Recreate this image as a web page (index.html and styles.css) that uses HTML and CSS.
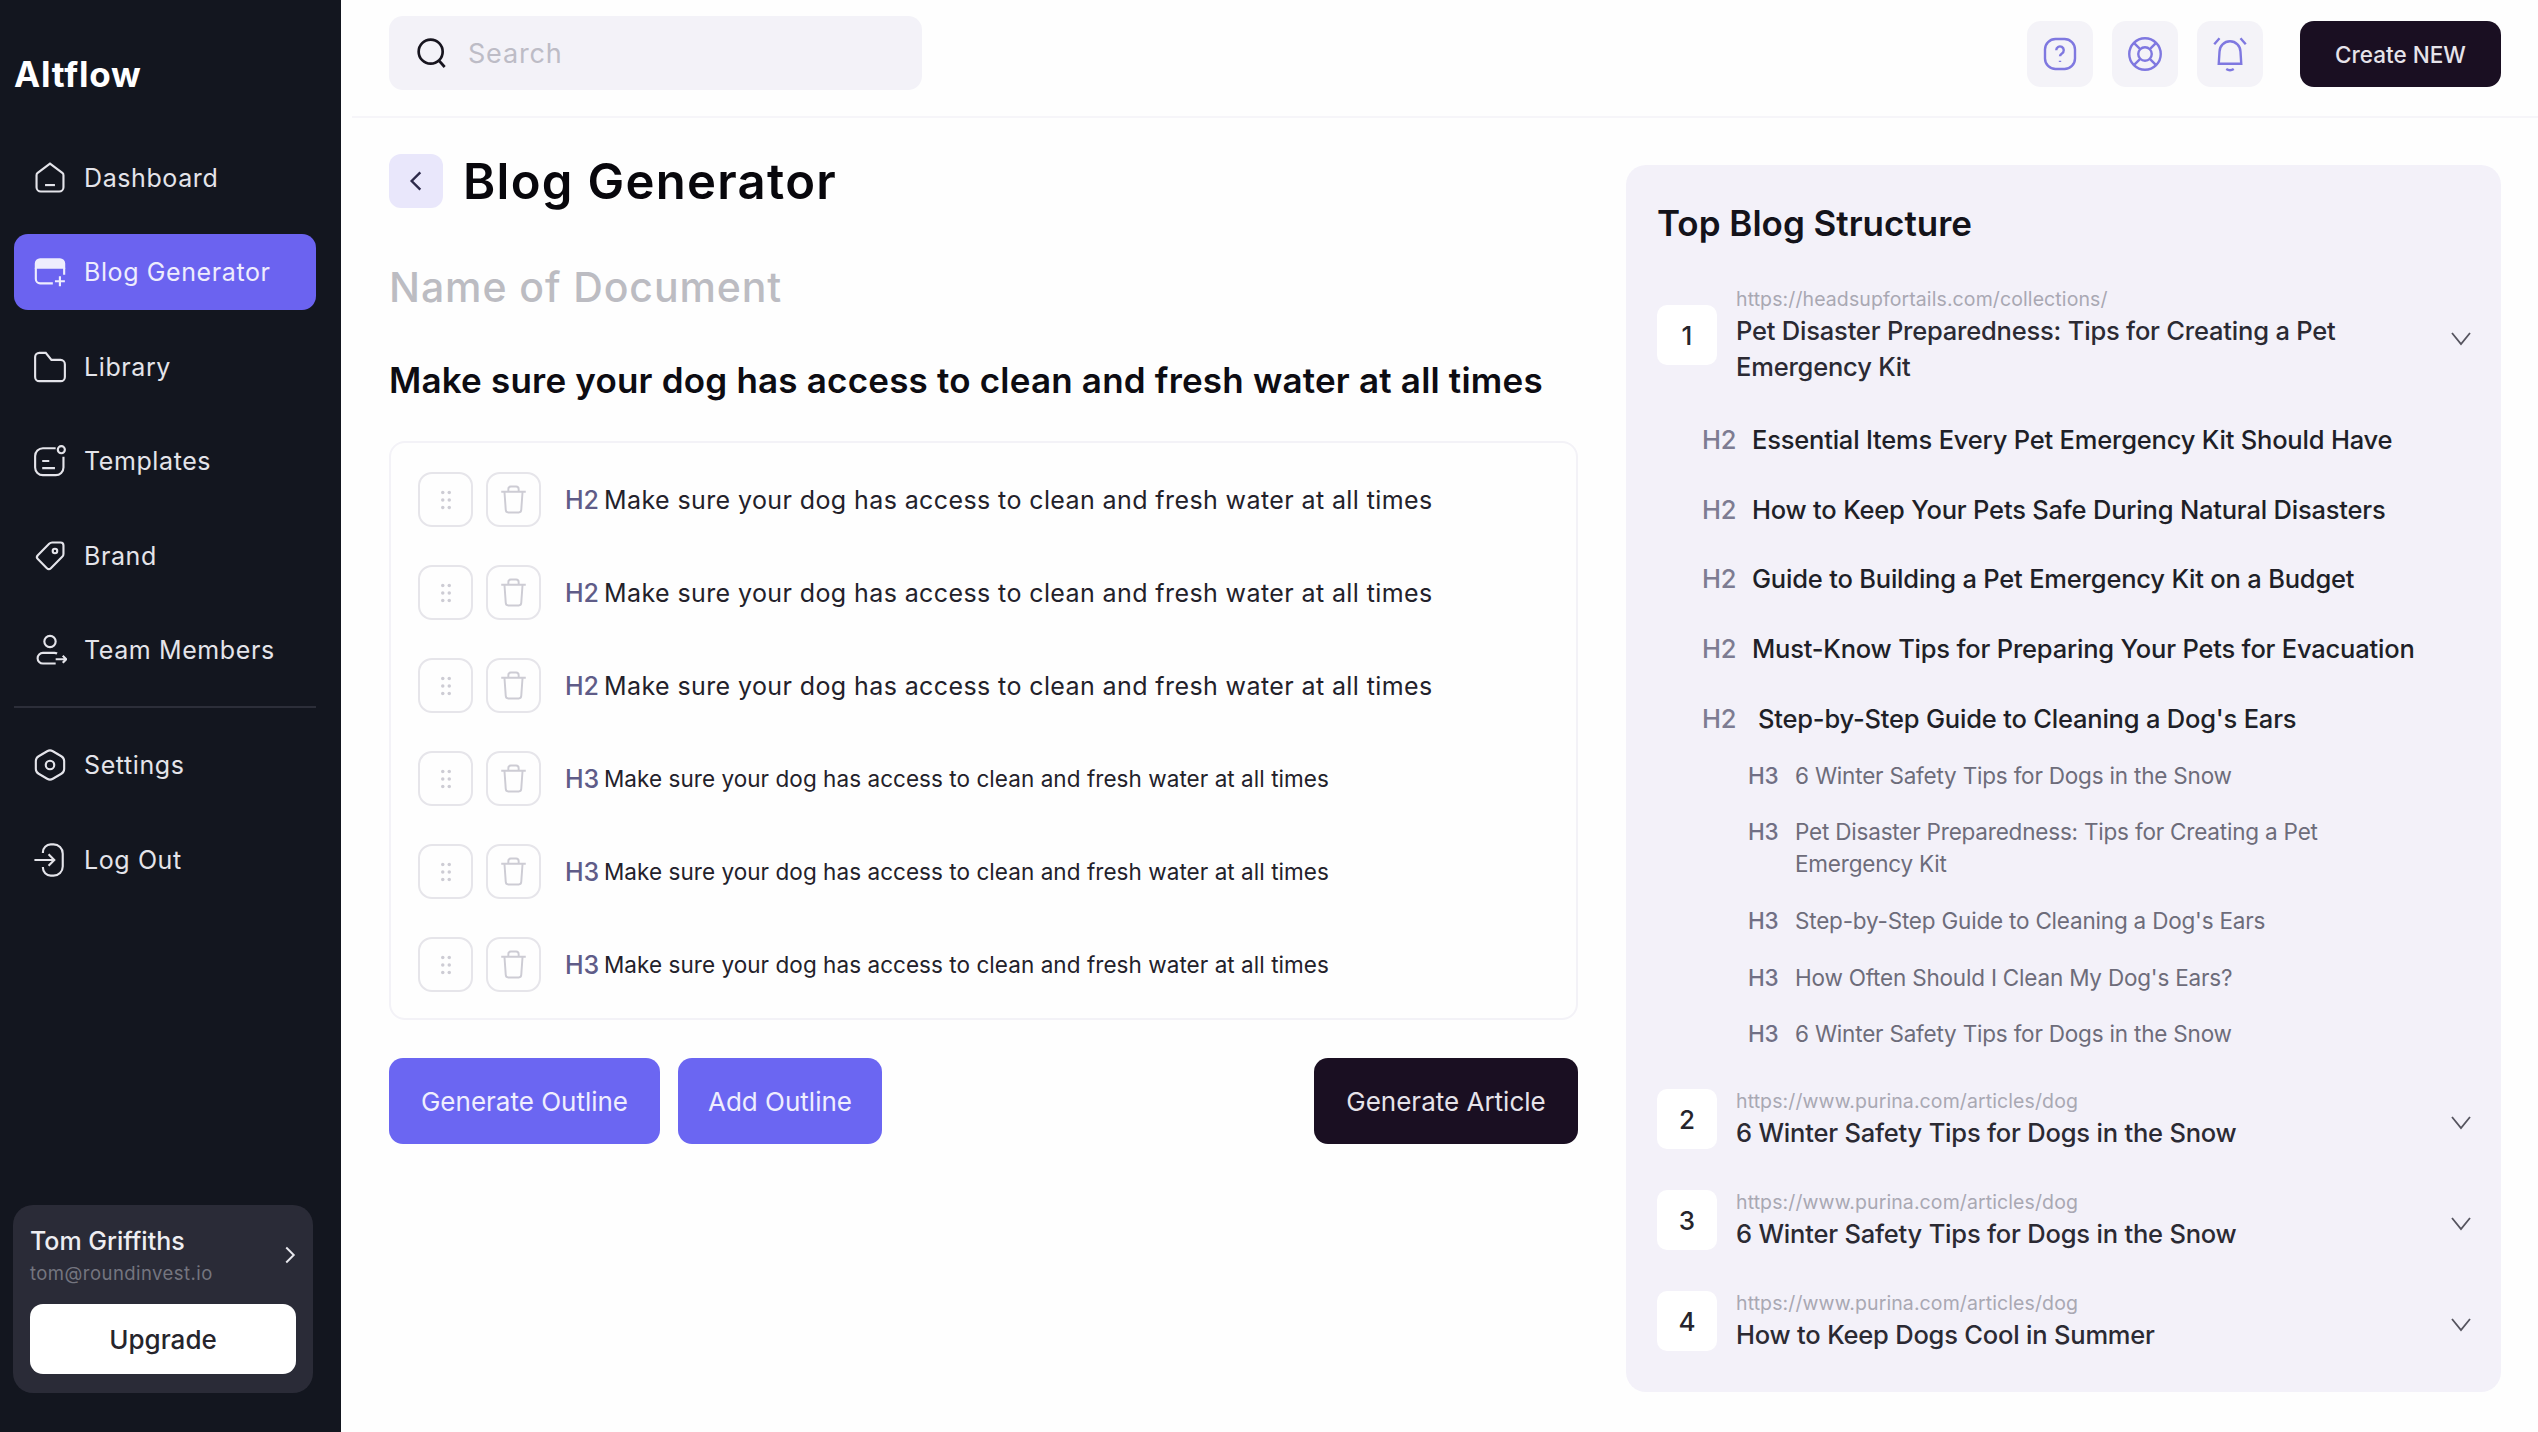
FILE: index.html
```html
<!DOCTYPE html>
<html lang="en">
<head>
  <meta charset="UTF-8" />
  <meta name="viewport" content="width=device-width, initial-scale=1.0" />
  <title>Altflow - Blog Generator</title>
  <link rel="stylesheet" href="styles.css">
</head>
<body>
  <svg class="sprite" width="0" height="0">
    <symbol id="i-drag" viewBox="0 0 24 24"><g fill="currentColor"><circle cx="9" cy="5" r="1.6"/><circle cx="15" cy="5" r="1.6"/><circle cx="9" cy="12" r="1.6"/><circle cx="15" cy="12" r="1.6"/><circle cx="9" cy="19" r="1.6"/><circle cx="15" cy="19" r="1.6"/></g></symbol>
    <symbol id="i-trash" viewBox="0 0 24 24"><path d="M2.5 6h19M5 6l1 14a2 2 0 0 0 2 2h8a2 2 0 0 0 2-2l1-14M8 6V4a2 2 0 0 1 2-2h4a2 2 0 0 1 2 2v2" fill="none" stroke="currentColor" stroke-width="1.5"/></symbol>
    <symbol id="i-chevron" viewBox="0 0 24 24"><path d="M3 7l9 11 9-11" fill="none" stroke="currentColor" stroke-width="1.8"/></symbol>
  </svg>

  <div class="app">
    <aside class="sidebar">
      <div class="logo">Altflow</div>
      <nav>
        <a class="nav-item">
          <svg viewBox="0 0 24 24"><path d="M2.5 10a2 2 0 0 1 .8-1.6L12 1.8l8.700 6.600a2 2 0 0 1 .8 1.600v8.500a3 3 0 0 1-3 3h-13a3 3 0 0 1-3-3z"/><path d="M8.500 17h7"/></svg>
          Dashboard
        </a>
        <a class="nav-item active">
          <svg viewBox="0 0 24 24"><path d="M2 9V6a3 3 0 0 1 3-3h14a3 3 0 0 1 3 3v3z" fill="currentColor"/><path d="M2 9v8a3 3 0 0 0 3 3h9M22 9v5"/><path d="M19 15v7M15.500 18.500h7"/></svg>
          Blog Generator
        </a>
        <a class="nav-item">
          <svg viewBox="0 0 24 24"><path d="M1.500 5a3 3 0 0 1 3-3h4.500l4 5h6.500a3 3 0 0 1 3 3v9a3 3 0 0 1-3 3h-15a3 3 0 0 1-3-3z"/></svg>
          Library
        </a>
        <a class="nav-item">
          <svg viewBox="0 0 24 24"><path d="M16 3H7a5.500 5.500 0 0 0-5.500 5.500v8A5.500 5.500 0 0 0 7 22h9a5.500 5.500 0 0 0 5.500-5.500V9"/><circle cx="20" cy="4" r="2.500"/><path d="M6.500 12h5M6.500 17h9"/></svg>
          Templates
        </a>
        <a class="nav-item">
          <svg viewBox="0 0 24 24"><path d="M13.500 2.500h6a2 2 0 0 1 2 2v6a3 3 0 0 1-.9 2.100l-8 8a2 2 0 0 1-2.800 0l-6.400-6.400a2 2 0 0 1 0-2.800l8-8a3 3 0 0 1 2.100-.9z"/><circle cx="15.500" cy="8.500" r="1.600"/></svg>
          Brand
        </a>
        <a class="nav-item">
          <svg viewBox="0 0 24 24"><circle cx="12" cy="6" r="4"/><path d="M17 14.500a4 4 0 0 0-2-.5H7a3.500 3.500 0 0 0 0 7.500h9"/><path d="M16 18.500h7M21 16l2.500 2.500L21 21"/></svg>
          Team Members
        </a>
        <div class="nav-divider"></div>
        <a class="nav-item">
          <svg viewBox="0 0 24 24"><path d="M10 2.300a4 4 0 0 1 4 0l6 3.500a4 4 0 0 1 2 3.400v5.600a4 4 0 0 1-2 3.400l-6 3.500a4 4 0 0 1-4 0l-6-3.500a4 4 0 0 1-2-3.400V9.200a4 4 0 0 1 2-3.400z"/><circle cx="12" cy="12" r="3"/></svg>
          Settings
        </a>
        <a class="nav-item">
          <svg viewBox="0 0 24 24"><path d="M7 7V6.500A5.500 5.500 0 0 1 12.500 1h2A6.500 6.500 0 0 1 21 7.500v9a6.500 6.500 0 0 1-6.500 6.500h-2A5.500 5.500 0 0 1 7 17.500V17"/><path d="M1 12h14M11 8l4 4-4 4"/></svg>
          Log Out
        </a>
      </nav>

      <div class="user-card">
        <div class="user-top">
          <div>
            <div class="user-name">Tom Griffiths</div>
            <div class="user-mail">tom@roundinvest.io</div>
          </div>
          <svg class="user-arrow" viewBox="0 0 24 24"><path d="M7 2l10 10-10 10" fill="none" stroke="currentColor" stroke-width="2.600"/></svg>
        </div>
        <button class="upgrade">Upgrade</button>
      </div>
    </aside>

    <div class="main">
      <header class="topbar">
        <div class="search">
          <svg viewBox="0 0 24 24"><circle cx="11" cy="11" r="9"/><path d="M17.500 18l4 4.500"/></svg>
          <span>Search</span>
        </div>
        <div class="top-actions">
          <div class="icon-btn">
            <svg viewBox="0 0 24 24"><rect x="2" y="2" width="20" height="20" rx="7"/><path d="M9.500 9.500a2.500 2.500 0 1 1 3.800 2.100c-.8.500-1.300 1-1.300 1.900"/><path d="M12 16.500v.8"/></svg>
          </div>
          <div class="icon-btn">
            <svg viewBox="0 0 24 24"><circle cx="12" cy="12" r="10.500"/><circle cx="12" cy="12" r="4.500"/><path d="M4.600 4.600l4.200 4.200M19.400 4.600l-4.200 4.200M4.600 19.400l4.200-4.200M19.400 19.400l-4.200-4.200"/></svg>
          </div>
          <div class="icon-btn bell">
            <svg viewBox="0 0 24 24"><path d="M4.500 18.500l.5-8a7 7 0 0 1 14 0l.5 8z"/><path d="M9.500 22c1.500 1 3.500 1 5 0M1.500 5.500L5 1.500M22.500 5.500L19 1.500"/></svg>
          </div>
          <button class="btn btn-dark create">Create NEW</button>
        </div>
      </header>

      <div class="content">
        <section class="editor">
          <div class="title-row">
            <div class="back">
              <svg viewBox="0 0 24 24"><path d="M16 4l-8 8 8 8" fill="none" stroke="currentColor" stroke-width="2.200"/></svg>
            </div>
            <h1>Blog Generator</h1>
          </div>
          <div class="doc-name">Name of Document</div>
          <h2 class="doc-heading">Make sure your dog has access to clean and fresh water at all times</h2>

          <div class="outline">
            <div class="row">
              <div class="sq"><svg><use href="#i-drag"/></svg></div>
              <div class="sq"><svg class="bin"><use href="#i-trash"/></svg></div>
              <span class="tag">H2</span><span class="row-text">Make sure your dog has access to clean and fresh water at all times</span>
            </div>
            <div class="row">
              <div class="sq"><svg><use href="#i-drag"/></svg></div>
              <div class="sq"><svg class="bin"><use href="#i-trash"/></svg></div>
              <span class="tag">H2</span><span class="row-text">Make sure your dog has access to clean and fresh water at all times</span>
            </div>
            <div class="row">
              <div class="sq"><svg><use href="#i-drag"/></svg></div>
              <div class="sq"><svg class="bin"><use href="#i-trash"/></svg></div>
              <span class="tag">H2</span><span class="row-text">Make sure your dog has access to clean and fresh water at all times</span>
            </div>
            <div class="row small">
              <div class="sq"><svg><use href="#i-drag"/></svg></div>
              <div class="sq"><svg class="bin"><use href="#i-trash"/></svg></div>
              <span class="tag">H3</span><span class="row-text">Make sure your dog has access to clean and fresh water at all times</span>
            </div>
            <div class="row small">
              <div class="sq"><svg><use href="#i-drag"/></svg></div>
              <div class="sq"><svg class="bin"><use href="#i-trash"/></svg></div>
              <span class="tag">H3</span><span class="row-text">Make sure your dog has access to clean and fresh water at all times</span>
            </div>
            <div class="row small">
              <div class="sq"><svg><use href="#i-drag"/></svg></div>
              <div class="sq"><svg class="bin"><use href="#i-trash"/></svg></div>
              <span class="tag">H3</span><span class="row-text">Make sure your dog has access to clean and fresh water at all times</span>
            </div>
          </div>

          <div class="actions">
            <button class="btn btn-purple outline-gen">Generate Outline</button>
            <button class="btn btn-purple outline-add">Add Outline</button>
            <button class="btn btn-dark article">Generate Article</button>
          </div>
        </section>

        <aside class="panel">
          <h3>Top Blog Structure</h3>

          <div class="source">
            <div class="num">1</div>
            <div class="source-body">
              <div class="url">https://headsupfortails.com/collections/</div>
              <div class="source-title">Pet Disaster Preparedness: Tips for Creating a Pet<br>Emergency Kit</div>
            </div>
            <svg class="chev"><use href="#i-chevron"/></svg>
          </div>

          <div class="h2-list">
            <div class="h2-row"><span class="tag">H2</span>Essential Items Every Pet Emergency Kit Should Have</div>
            <div class="h2-row"><span class="tag">H2</span>How to Keep Your Pets Safe During Natural Disasters</div>
            <div class="h2-row"><span class="tag">H2</span>Guide to Building a Pet Emergency Kit on a Budget</div>
            <div class="h2-row"><span class="tag">H2</span>Must-Know Tips for Preparing Your Pets for Evacuation</div>
            <div class="h2-row wide"><span class="tag">H2</span>Step-by-Step Guide to Cleaning a Dog's Ears</div>
          </div>

          <div class="h3-list">
            <div class="h3-row"><span class="tag">H3</span><span>6 Winter Safety Tips for Dogs in the Snow</span></div>
            <div class="h3-row"><span class="tag">H3</span><span>Pet Disaster Preparedness: Tips for Creating a Pet<br>Emergency Kit</span></div>
            <div class="h3-row"><span class="tag">H3</span><span>Step-by-Step Guide to Cleaning a Dog's Ears</span></div>
            <div class="h3-row"><span class="tag">H3</span><span>How Often Should I Clean My Dog's Ears?</span></div>
            <div class="h3-row"><span class="tag">H3</span><span>6 Winter Safety Tips for Dogs in the Snow</span></div>
          </div>

          <div class="source">
            <div class="num">2</div>
            <div class="source-body">
              <div class="url">https://www.purina.com/articles/dog</div>
              <div class="source-title">6 Winter Safety Tips for Dogs in the Snow</div>
            </div>
            <svg class="chev"><use href="#i-chevron"/></svg>
          </div>
          <div class="source">
            <div class="num">3</div>
            <div class="source-body">
              <div class="url">https://www.purina.com/articles/dog</div>
              <div class="source-title">6 Winter Safety Tips for Dogs in the Snow</div>
            </div>
            <svg class="chev"><use href="#i-chevron"/></svg>
          </div>
          <div class="source">
            <div class="num">4</div>
            <div class="source-body">
              <div class="url">https://www.purina.com/articles/dog</div>
              <div class="source-title">How to Keep Dogs Cool in Summer</div>
            </div>
            <svg class="chev"><use href="#i-chevron"/></svg>
          </div>
        </aside>
      </div>
    </div>
  </div>
</body>
</html>
```

FILE: styles.css
```css
* {
  box-sizing: border-box;
}
body {
  margin: 0;
  background: #fefefe;
  font-family: Inter, "Open Sans", sans-serif;
  color: #15131c;
}
.sprite {
  display: block;
}
h1, h2, h3 {
  margin: 0;
}
button {
  font-family: inherit;
  border: none;
}
.app {
  display: flex;
  width: 2538px;
  height: 1432px;
  overflow: hidden;
}

/* sidebar */
.sidebar {
  width: 341px;
  flex-shrink: 0;
  display: flex;
  flex-direction: column;
  background: #13161f;
  padding: 54px 25px 39px 14px;
  color: #e8e8ee;
}
.logo {
  height: 40px;
  line-height: 40px;
  font-size: 35px;
  font-weight: 700;
  letter-spacing: .8px;
  color: #fff;
  margin-bottom: 46px;
}
.nav-item {
  display: flex;
  align-items: center;
  gap: 17px;
  height: 76px;
  margin-bottom: 18.4px;
  padding-left: 19px;
  border-radius: 14px;
  font-size: 25px;
  letter-spacing: .6px;
  color: #e4e4ea;
}
.nav-item svg {
  width: 34px;
  height: 34px;
  flex-shrink: 0;
  fill: none;
  stroke: currentColor;
  stroke-width: 1.5;
}
.nav-item.active {
  background: #6b63f0;
  color: #eeedfd;
}
.nav-divider {
  height: 2px;
  background: #2c2e39;
  margin-bottom: 19px;
}
.user-card {
  margin-top: auto;
  width: 300px;
  height: 188px;
  background: #2a2b37;
  border-radius: 20px;
  padding: 18px 17px 0 17px;
  margin-left: -1px;
}
.user-top {
  display: flex;
  align-items: center;
  justify-content: space-between;
  height: 64px;
  margin-bottom: 17px;
}
.user-name {
  font-size: 25px;
  font-weight: 500;
  color: #eeeef2;
  line-height: 36px;
}
.user-mail {
  font-size: 18.500px;
  letter-spacing: .45px;
  color: #74757f;
  line-height: 28px;
}
.user-arrow {
  width: 18px;
  height: 22px;
  margin-right: -3px;
  color: #e8e8ee;
}
.upgrade {
  display: block;
  width: 266px;
  height: 70px;
  background: #fff;
  border-radius: 13px;
  font-size: 26px;
  font-weight: 500;
  color: #26252c;
}

/* top bar */
.main {
  flex: 1;
  min-width: 0;
}
.topbar {
  display: flex;
  align-items: center;
  justify-content: space-between;
  height: 118px;
  margin-left: 11px;
  padding: 0 37px 10px 37px;
  border-bottom: 2px solid #f6f5f9;
}
.search {
  display: flex;
  align-items: center;
  gap: 20px;
  width: 533px;
  height: 74px;
  padding-left: 27px;
  background: #f3f2f8;
  border-radius: 14px;
  font-size: 27px;
  letter-spacing: .8px;
  color: #bdbcc6;
}
.search svg {
  width: 32px;
  height: 32px;
  fill: none;
  stroke: #17151f;
  stroke-width: 2;
}
.top-actions {
  display: flex;
  align-items: center;
  margin-top: 2px;
}
.icon-btn {
  display: flex;
  align-items: center;
  justify-content: center;
  width: 66px;
  height: 66px;
  margin-right: 19px;
  background: #f4f3f8;
  border-radius: 14px;
}
.icon-btn svg {
  width: 36px;
  height: 36px;
  fill: none;
  stroke: #7f78e0;
  stroke-width: 1.600;
}
.icon-btn.bell {
  margin-right: 37px;
}
.btn {
  border-radius: 14px;
  font-size: 26px;
}
.btn-dark {
  background: #1a0f22;
  color: #e6e3ea;
}
.btn-purple {
  background: #6b66f2;
  color: #efeefe;
}
.create {
  width: 201px;
  height: 66px;
  font-size: 22.500px;
  font-weight: 500;
}

/* left column */
.content {
  display: flex;
  align-items: flex-start;
  gap: 48px;
  padding-left: 48px;
}
.editor {
  width: 1189px;
  flex-shrink: 0;
}
.title-row {
  display: flex;
  align-items: center;
  gap: 20px;
  height: 54px;
  margin-top: 36px;
}
.back {
  display: flex;
  align-items: center;
  justify-content: center;
  width: 54px;
  height: 54px;
  background: #e9e7fb;
  border-radius: 12px;
  color: #2d2a4a;
}
.back svg {
  width: 26px;
  height: 26px;
}
h1 {
  font-size: 49px;
  font-weight: 600;
  letter-spacing: 1.3px;
  color: #08070c;
}
.doc-name {
  margin-top: 54px;
  line-height: 50px;
  font-size: 41px;
  font-weight: 500;
  letter-spacing: .9px;
  color: #bcbcc2;
}
.doc-heading {
  margin-top: 46px;
  line-height: 44px;
  font-size: 35px;
  font-weight: 600;
  letter-spacing: .2px;
  color: #0d0c12;
}
.outline {
  display: flex;
  flex-direction: column;
  gap: 38px;
  width: 1189px;
  height: 579px;
  margin-top: 39px;
  padding: 29px 0 0 27px;
  border: 2px solid #f3f2f7;
  border-radius: 16px;
}
.row {
  display: flex;
  align-items: center;
  height: 55px;
  font-size: 25px;
}
.sq {
  display: flex;
  align-items: center;
  justify-content: center;
  width: 55px;
  height: 55px;
  margin-right: 13px;
  border: 2px solid #e6e5ea;
  border-radius: 14px;
  color: #cdccd4;
}
.sq svg {
  width: 26px;
  height: 26px;
}
.sq svg.bin {
  width: 31px;
  height: 31px;
}
.row .tag {
  width: 39px;
  margin-left: 11px;
  font-weight: 500;
  color: #5f5c88;
}
.row-text {
  letter-spacing: .4px;
  color: #23212a;
}
.row.small .row-text {
  font-size: 22.500px;
  letter-spacing: .05px;
}
.actions {
  display: flex;
  gap: 18px;
  margin-top: 38px;
}
.actions .btn {
  height: 86px;
}
.outline-gen {
  width: 271px;
}
.outline-add {
  width: 204px;
}
.article {
  width: 264px;
  margin-left: auto;
}

/* right panel */
.panel {
  width: 875px;
  height: 1227px;
  margin-top: 47px;
  padding: 36px 31px 0;
  background: #f3f1f9;
  border-radius: 20px;
}
.panel h3 {
  line-height: 44px;
  font-size: 35px;
  font-weight: 600;
  color: #14131a;
}
.source {
  display: flex;
  align-items: center;
  margin-top: 37px;
}
.panel h3 + .source {
  margin-top: 40px;
}
.num {
  display: flex;
  align-items: center;
  justify-content: center;
  width: 60px;
  height: 60px;
  flex-shrink: 0;
  margin-right: 19px;
  background: #fff;
  border-radius: 10px;
  font-size: 26px;
  font-weight: 500;
  color: #26252c;
}
.source-body {
  flex: 1;
}
.url {
  line-height: 28px;
  font-size: 19.500px;
  letter-spacing: .1px;
  color: #a9a8b3;
}
.source-title {
  line-height: 36px;
  font-size: 25.500px;
  font-weight: 500;
  letter-spacing: -.2px;
  color: #2b2a33;
}
.chev {
  width: 24px;
  height: 24px;
  margin: 6px -3px 0 0;
  color: #55545f;
  flex-shrink: 0;
}
.h2-list {
  display: flex;
  flex-direction: column;
  gap: 33.700px;
  margin-top: 37px;
  padding-left: 45px;
}
.h2-row {
  display: flex;
  line-height: 36px;
  font-size: 25.500px;
  font-weight: 500;
  letter-spacing: -.2px;
  color: #201f27;
}
.h2-row .tag {
  width: 50px;
  color: #7d7c92;
}
.h2-row.wide .tag {
  width: 56px;
}
.h3-list {
  display: flex;
  flex-direction: column;
  gap: 24.600px;
  margin-top: 23px;
  padding-left: 91px;
}
.h3-row {
  display: flex;
  line-height: 32px;
  font-size: 22.500px;
  letter-spacing: -.2px;
  color: #6d6c7a;
}
.h3-row .tag {
  width: 47px;
  font-weight: 500;
  color: #706f85;
}
```
